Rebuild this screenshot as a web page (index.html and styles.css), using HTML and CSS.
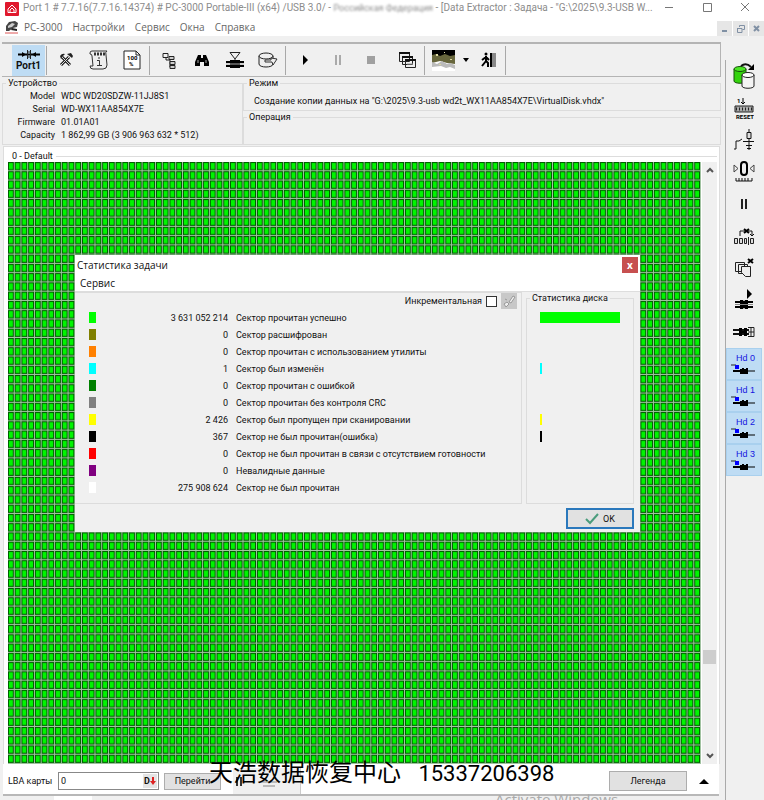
FILE: index.html
```html
<!DOCTYPE html>
<html lang="ru">
<head>
  <meta charset="UTF-8">
  <meta name="viewport" content="width=device-width, initial-scale=1.0">
  <title>PC-3000 Data Extractor</title>
  <link rel="stylesheet" href="styles.css">
</head>
<body>
  <div class="app">
    <!-- Window title -->
    <header class="titlebar">
      <svg class="app-icon" width="14" height="14" viewBox="0 0 14 14"><rect width="14" height="14" rx="1" fill="#e0182d"/><path d="M3 10.500V7L7 3l4 4v3.500H3M5 10V8l2-2 2 2v2" fill="none" stroke="#fff"/></svg>
      <div class="title">Port 1 # 7.7.16(7.7.16.14374) # PC-3000 Portable-III (x64) /USB 3.0/ - <span class="masked">Российская Федерация</span> - [Data Extractor : Задача - "G:\2025\9.3-USB W...</div>
      <div class="window-buttons">
        <button aria-label="Свернуть"><svg width="10" height="10"><path d="M1 5.500h8" stroke="#777"/></svg></button>
        <button aria-label="Развернуть"><svg width="10" height="10"><path d="M1.500 1.500h8v8h-8z" fill="none" stroke="#777"/></svg></button>
        <button aria-label="Закрыть"><svg width="10" height="10"><path d="M1 1l8 8M9 1L1 9" stroke="#777"/></svg></button>
      </div>
    </header>

    <nav class="menubar">
      <svg class="app-icon" width="14" height="14" viewBox="0 0 14 14"><path d="M1 6l3-4 6-1 3 2-1 4-4 1-4 3H1z" fill="#444"/><path d="M3 6l4-3 3 1-3 3-4 1z" fill="#ccc"/><path d="M7 8l5 1v2l-6-1z" fill="#222"/><path d="M0 13h13" stroke="#d55" stroke-width="1"/></svg>
      <button>PC-3000</button>
      <button>Настройки</button>
      <button>Сервис</button>
      <button>Окна</button>
      <button>Справка</button>
      <div class="child-buttons">
        <button aria-label="Свернуть окно"><svg width="9" height="9"><path d="M2 7h5" stroke="#8090a4" stroke-width="2"/></svg></button>
        <button aria-label="Восстановить окно"><svg width="9" height="9"><path d="M3.500 3V1.500h5v4H6.500M1 4.500h5v4H1.500v-4" fill="none" stroke="#8090a4"/></svg></button>
        <button aria-label="Закрыть окно"><svg width="9" height="9"><path d="M2 2l5 5M7 2L2 7" stroke="#8090a4" stroke-width="2"/></svg></button>
      </div>
    </nav>

    <div class="workspace">
      <main class="main">
        <div class="toolbar">
          <button class="tool active port"><svg width="22" height="11" viewBox="0 0 22 11"><path d="M0 5.500h22" stroke="#000" stroke-width="2"/><path d="M4 3v5l4-2.500zM18 3v5l-4-2.500z"/><path d="M9.500 1v9M12.500 1v9M9 3h4M9 8h4" stroke="#222"/></svg><span>Port1</span></button>
          <i class="sep"></i>
          <button class="tool" aria-label="Утилиты"><svg width="16" height="16" viewBox="0 0 16 16"><path d="M4 5l8 8M11 5l-8 8" stroke="#222" stroke-width="3"/><path d="M4 5l8 8M11 5l-8 8" stroke="#ddd"/><path d="M2 4q2-3 5-2L5 4 3 7zM9 2l5 4 1-2-2-3z" fill="#222"/></svg></button>
          <button class="tool" aria-label="Протокол"><svg width="20" height="20" viewBox="0 0 20 20"><path d="M1 3Q1 1 3 1h15q-2 1-1 4l1 10q0 4-4 4H4q-3 0-3-3h3L3 6Q3 4 1 4z" fill="#eee" stroke="#333"/><path d="M5 4h11" stroke="#333" stroke-width="3" stroke-dasharray="2 1"/><path d="M8 10.500h2.500V15M8 15.500h5M9 8h2" fill="none" stroke="#333"/></svg></button>
          <button class="tool" aria-label="Отчёт"><svg width="18" height="20" viewBox="0 0 18 20"><path d="M1 1h12l4 4v14H1z" fill="#fff" stroke="#222"/><path d="M13 1v4h4" fill="none" stroke="#222"/><text x="4" y="10" class="svg-small">100</text><text x="6" y="16" class="svg-small">%</text></svg></button>
          <i class="sep"></i>
          <button class="tool" aria-label="Структура"><svg width="14" height="17" viewBox="0 0 14 17"><path d="M1 1.500h5v4H1zM4 6v2h4M8 8v7" fill="none" stroke="#222"/><path d="M7 4.500h5v3H7zM8 9.500h5v3H8zM8 13.500h5v3H8z" fill="#ccc" stroke="#222"/></svg></button>
          <button class="tool" aria-label="Поиск"><svg width="14" height="13" viewBox="0 0 14 13"><path d="M3 1h3v3h2V1h3l3 7v4H9V8H5v4H0V8z"/><path d="M3 6v3M11 6v3" stroke="#aaa"/></svg></button>
          <button class="tool" aria-label="Фильтр"><svg width="20" height="18" viewBox="0 0 20 18"><path d="M5 1.500h10L10 8zM10 8v9" fill="none" stroke="#222"/><path d="M1 11h18M1 15h18" stroke="#000" stroke-width="2"/><path d="M5 9h10v8H5z"/><path d="M1 13h18" stroke="#aaa"/></svg></button>
          <button class="tool" aria-label="Диск"><svg width="20" height="16" viewBox="0 0 20 16"><path d="M1 4v8c0 4 14 4 14 0V4" fill="#eee" stroke="#222"/><ellipse cx="8" cy="4" rx="7" ry="3" fill="#eee" stroke="#222"/><path d="M7 8h6V6l6 1-4 6-1-3H7z" fill="#eee" stroke="#333"/></svg></button>
          <i class="sep"></i>
          <button class="tool" aria-label="Старт"><svg width="6" height="10"><path d="M1 0l5 5-5 5z"/></svg></button>
          <button class="tool" aria-label="Пауза"><svg width="8" height="10"><path d="M2 0v10M6 0v10" stroke="#aaa" stroke-width="2"/></svg></button>
          <button class="tool" aria-label="Стоп"><svg width="8" height="8"><path d="M0 0h8v8H0z" fill="#a0a0a0"/></svg></button>
          <button class="tool windows" aria-label="Окна"><svg width="18" height="18" viewBox="0 0 18 18"><g fill="#eee" stroke="#222"><path d="M1.500 1.500h10v9h-10zM4.500 5.500h10v8h-10zM7.500 8.500h10v8h-10z"/></g><path d="M1 2h11M4 6h11M7 9h11" stroke="#111" stroke-width="2"/><path d="M9 13h6" stroke="#999"/></svg></button>
          <i class="sep"></i>
          <button class="tool" aria-label="Карта"><svg width="23" height="21" viewBox="0 0 23 21"><path d="M0 0h23v21H0z" fill="#fff"/><path d="M0 0h23v6H0z"/><path d="M0 5l4-1 4 2 5-2 5 2 5-1v9l-8-1-7-2-8 2z" fill="#68673d"/><path d="M0 12l5 2 5-3 5 3 3-1 5 2v4l-5-2-4 1-5-2-9 1z" fill="#bbb"/><path d="M4 4h2v2H4zM12 2h1v1h-1zM18 9h2v1h-2zM7 14h2v1H7z" fill="#dcd8a0"/></svg></button>
          <button class="drop" aria-label="Список"><svg width="6" height="4"><path d="M0 0h6L3 4z"/></svg></button>
          <button class="tool" aria-label="Выход"><svg width="16" height="16" viewBox="0 0 16 16"><path d="M10 1h2v14h-2z"/><path d="M12 1h4v14h-4z" fill="#888"/><circle cx="6" cy="2" r="1.500"/><path d="M6 4v5l-4 5M6 9l2 2v4M6 5L2 8M6 5l3 3" fill="none" stroke="#000" stroke-width="2"/></svg></button>
          <i class="sep"></i>
        </div>

        <section class="info">
          <fieldset class="group device">
            <legend>Устройство</legend>
            <dl>
              <dt>Model</dt><dd>WDC WD20SDZW-11JJ8S1</dd>
              <dt>Serial</dt><dd>WD-WX11AA854X7E</dd>
              <dt>Firmware</dt><dd>01.01A01</dd>
              <dt>Capacity</dt><dd>1 862,99 GB (3 906 963 632 * 512)</dd>
            </dl>
          </fieldset>
          <div class="state">
            <fieldset class="group">
              <legend>Режим</legend>
              <p>Создание копии данных на "G:\2025\9.3-usb wd2t_WX11AA854X7E\VirtualDisk.vhdx"</p>
            </fieldset>
            <fieldset class="group">
              <legend>Операция</legend>
            </fieldset>
          </div>
        </section>

        <section class="map-panel">
          <h2><span>0 - Default</span></h2>
          <div class="map-area">
            <!-- 103 x 65 sectors -->
            <svg class="map" viewBox="0 0 721 585" preserveAspectRatio="none">
              <defs>
                <pattern id="cell" width="7" height="9" patternUnits="userSpaceOnUse">
                  <rect width="7" height="9" fill="#a4c4a4"/>
                  <rect width="6" height="8" fill="#005c00"/>
                  <rect x="1" y="1" width="4" height="6" fill="#00f500"/>
                </pattern>
              </defs>
              <rect width="721" height="585" fill="url(#cell)"/>
            </svg>
            <div class="scrollbar">
              <svg width="8" height="6"><path d="M1 5l3-3 3 3" fill="none" stroke="#555" stroke-width="2"/></svg>
              <div class="thumb"></div>
              <svg width="8" height="6"><path d="M1 1l3 3 3-3" fill="none" stroke="#555" stroke-width="2"/></svg>
            </div>
          </div>
        </section>

        <form class="bottom">
          <label for="lba">LBA карты</label>
          <div class="lba-box">
            <input id="lba" type="text" value="0">
            <button type="button" aria-label="Система счисления"><b>D</b><svg width="6" height="8"><path d="M2 0h2v4h2L3 8 0 4h2z" fill="#d22"/></svg></button>
          </div>
          <button type="button" class="btn go">Перейти</button>
          <div class="mini-tools">
            <svg width="50" height="14"><path d="M4 3v9M8 3v9" stroke="#333" stroke-width="2"/><path d="M28 8h16M30 12h12" stroke="#888"/></svg>
          </div>
          <button type="button" class="btn legend">Легенда</button>
          <button type="button" class="up" aria-label="Показать"><svg width="10" height="6"><path d="M0 6l5-5 5 5z"/></svg></button>
        </form>
        <div class="tabs"><i></i></div>
      </main>

      <aside class="sidebar">
        <button aria-label="Питание"><svg width="22" height="27" viewBox="0 0 22 27"><path d="M1 6v12c0 3 12 3 12 0V6" fill="#34d40d" stroke="#174f0b"/><ellipse cx="7" cy="6" rx="6" ry="2.500" fill="#4ae623" stroke="#174f0b"/><path d="M9 12v11c0 3 12 3 12 0V12" fill="#f4f4f4" stroke="#222"/><ellipse cx="15" cy="12" rx="6" ry="2.500" fill="#fff" stroke="#222"/><path d="M8 3q5-4 10 1" fill="none" stroke="#111" stroke-width="2"/><path d="M21 1v6h-6z"/></svg></button>
        <button aria-label="Reset"><svg width="20" height="22" viewBox="0 0 20 22"><text x="3" y="6" class="svg-small">1</text><path d="M9 1v6M7 5l2 2 2-2" fill="none" stroke="#000"/><path d="M1 9h18v6H1z" fill="#aaa" stroke="#222"/><path d="M2 12h16" stroke="#222" stroke-width="3" stroke-dasharray="1 2"/><text x="2" y="22" class="svg-small">RESET</text></svg></button>
        <button aria-label="Ключ"><svg width="20" height="22" viewBox="0 0 20 22"><path d="M0 20h2v-8h3l3-2" fill="none" stroke="#111"/><path d="M13 3.500h4v6h-4zM15 0v3M15 10v3M9 12.500h12M12 16.500h6M15 13v8M13 19.500h4" fill="#ddd" stroke="#111"/></svg></button>
        <button aria-label="Рекалибровка"><svg width="22" height="22" viewBox="0 0 22 22"><path d="M1 4v7l4-3.500zM21 4v7l-4-3.500z" fill="#eee" stroke="#444"/><rect x="8" y="1" width="6" height="13" rx="3" fill="none" stroke="#000" stroke-width="2"/><path d="M3 17v3h16v-3M6 17v3M9 17v3M12 17v3M15 17v3" fill="none" stroke="#111"/></svg></button>
        <button aria-label="Пауза"><svg width="8" height="10"><path d="M2 0v10M6 0v10" stroke="#222" stroke-width="2"/></svg></button>
        <button aria-label="Пропуск"><svg width="20" height="17" viewBox="0 0 20 17"><path d="M6 8V3h12v5M16 6l2 2 2-2" fill="none" stroke="#111"/><path d="M10 1l5 4M15 1l-5 4" stroke="#000" stroke-width="2"/><path d="M.500 10.500h3v5h-3zM5.500 10.500h3v5h-3zM10.500 10.500h2v5h-2zM16.500 10.500h3v5h-3zM14.500 9v8" fill="#ddd" stroke="#222"/></svg></button>
        <button aria-label="Очистить"><svg width="20" height="20" viewBox="0 0 20 20"><g fill="#eee" stroke="#222"><path d="M1.500 4.500h9v9h-9zM4.500 6.500h9v9h-9z"/><path d="M7.500 8.500h9v10h-5l-4-4z"/></g><path d="M14 1l5 4M19 1l-5 4" stroke="#000" stroke-width="2"/></svg></button>
        <button aria-label="Запуск"><svg width="20" height="22" viewBox="0 0 20 22"><path d="M13 0l5 5-5 5z"/><path d="M1 13h18M1 18h18" stroke="#000" stroke-width="2"/><path d="M6 11h3l1 2 1-2h3v9h-3l-1-2-1 2H6z"/><path d="M1 15.500h18" stroke="#888"/></svg></button>
        <button aria-label="Головы"><svg width="22" height="12" viewBox="0 0 22 12"><path d="M0 4h16M0 8h16" stroke="#111" stroke-width="2"/><path d="M6 2h3v3h2V2h3v8h-3V7H9v3H6z"/><path d="M15 1.500h6v9h-6M15 6h6M18 1v10" fill="none" stroke="#222"/></svg></button>
        <button class="head">Hd 0<svg width="24" height="10"><use href="#hd"/></svg></button>
        <button class="head">Hd 1<svg width="24" height="10"><use href="#hd"/></svg></button>
        <button class="head">Hd 2<svg width="24" height="10"><use href="#hd"/></svg></button>
        <button class="head">Hd 3<svg width="24" height="10"><use href="#hd"/></svg></button>
      </aside>
    </div>

    <!-- Task statistics dialog -->
    <div class="dialog" role="dialog" aria-labelledby="dialog-title">
      <div class="dialog-title">
        <span id="dialog-title">Статистика задачи</span>
        <button aria-label="Закрыть">x</button>
      </div>
      <div class="dialog-menu"><button>Сервис</button></div>
      <div class="dialog-body">
        <div class="stats">
          <div class="stats-head">
            <label for="inc">Инкрементальная</label>
            <input id="inc" type="checkbox">
            <button aria-label="Очистить"><svg width="14" height="14"><path d="M2 10l3-2 2 2-3 3zM7 8l4-6 2 1-4 6zM3 5l2 1" fill="#eee" stroke="#999"/></svg></button>
          </div>
          <table>
            <tr><td><i class="chip lime"></i></td><td>3 631 052 214</td><td>Сектор прочитан успешно</td></tr>
            <tr><td><i class="chip olive"></i></td><td>0</td><td>Сектор расшифрован</td></tr>
            <tr><td><i class="chip orange"></i></td><td>0</td><td>Сектор прочитан с использованием утилиты</td></tr>
            <tr><td><i class="chip cyan"></i></td><td>1</td><td>Сектор был изменён</td></tr>
            <tr><td><i class="chip green"></i></td><td>0</td><td>Сектор прочитан с ошибкой</td></tr>
            <tr><td><i class="chip gray"></i></td><td>0</td><td>Сектор прочитан без контроля CRC</td></tr>
            <tr><td><i class="chip yellow"></i></td><td>2 426</td><td>Сектор был пропущен при сканировании</td></tr>
            <tr><td><i class="chip black"></i></td><td>367</td><td>Сектор не был прочитан(ошибка)</td></tr>
            <tr><td><i class="chip red"></i></td><td>0</td><td>Сектор не был прочитан в связи с отсутствием готовности</td></tr>
            <tr><td><i class="chip purple"></i></td><td>0</td><td>Невалидные данные</td></tr>
            <tr><td><i class="chip white"></i></td><td>275 908 624</td><td>Сектор не был прочитан</td></tr>
          </table>
        </div>
        <fieldset class="group disk">
          <legend>Статистика диска</legend>
          <div class="bars">
            <i class="lime" style="width: 100%"></i>
            <i></i>
            <i></i>
            <i class="cyan" style="width: 2%"></i>
            <i></i>
            <i></i>
            <i class="yellow" style="width: 2%"></i>
            <i class="black" style="width: 2%"></i>
          </div>
        </fieldset>
      </div>
      <div class="dialog-footer">
        <button><svg width="14" height="12"><path d="M1 6l4 4 8-9" fill="none" stroke="#4a9c7c" stroke-width="2"/></svg>OK</button>
      </div>
    </div>

    <div class="contact">天浩数据恢复中心 <span>15337206398</span></div>
    <div class="activate">Activate Windows</div>
  </div>

  <svg width="0" height="0" class="defs">
    <symbol id="hd" viewBox="0 0 24 10"><path d="M0 1h5" stroke="#222"/><path d="M4 1h4v4H4z" fill="#00f"/><path d="M2 7h22" stroke="#000" stroke-width="1"/><path d="M9 5h2V4h2v1h2V4h2v6H9z"/><path d="M2 7h7" stroke="#000" stroke-width="2"/></symbol>
  </svg>
</body>
</html>
```

FILE: styles.css
```css
* {
  box-sizing: border-box;
}

body {
  margin: 0;
  background: #f0f0f0;
  color: #111;
  font-family: Roboto, Arial, sans-serif;
  font-size: 9px;
  line-height: 12px;
}

button {
  margin: 0;
  padding: 0;
  border: 0;
  background: none;
  color: inherit;
  font: inherit;
  display: flex;
  align-items: center;
  justify-content: center;
}

svg {
  flex: none;
}

.app {
  position: relative;
  height: 100vh;
  overflow: hidden;
  display: flex;
  flex-direction: column;
}

.defs {
  display: block;
}

.svg-small {
  font-size: 6px;
  font-weight: bold;
}

/* Title and menu */
.titlebar {
  flex: none;
  height: 18px;
  padding-left: 5px;
  display: flex;
  align-items: center;
  gap: 4px;
  background: #fff;
  color: #8c8c8c;
  font-size: 10px;
}

.title {
  flex: 1;
  min-width: 0;
  white-space: nowrap;
  padding-bottom: 2px;
}

.masked {
  font-size: 9px;
  filter: blur(1px);
}

.window-buttons {
  display: flex;
  margin-top: -4px;
}

.window-buttons button {
  width: 38px;
  height: 14px;
}

.menubar {
  flex: none;
  height: 18px;
  padding-left: 5px;
  display: flex;
  align-items: center;
  gap: 10px;
  background: #fff;
  color: #666;
  font-family: "Open Sans", sans-serif;
  font-size: 10px;
}

.menubar .app-icon {
  margin-right: -5px;
}

.child-buttons {
  display: flex;
  gap: 1px;
  margin-left: auto;
  align-self: flex-end;
}

.child-buttons button {
  width: 15px;
  height: 15px;
  background: #e6e6e6;
}

.workspace {
  flex: 1;
  min-height: 0;
  display: flex;
}

.main {
  flex: 1;
  min-width: 0;
  padding: 6px 4px 0 2px;
  display: flex;
  flex-direction: column;
}

/* Toolbar */
.toolbar {
  flex: none;
  height: 35px;
  padding-left: 10px;
  display: flex;
  align-items: center;
  border: 1px solid #b4b4b4;
  border-top-width: 2px;
  border-left: 0;
}

.tool {
  width: 33px;
  height: 31px;
}

.windows {
  margin-left: 3px;
}

.port {
  flex-direction: column;
  font-size: 10px;
  font-weight: bold;
  line-height: 11px;
}

.active,
.head {
  background: #bedcf4;
}

.drop {
  width: 11px;
  height: 31px;
}

.sep {
  width: 1px;
  height: 29px;
  margin: 0 2px 0 1px;
  background: #a8a8a8;
}

/* Device info */
.info {
  flex: none;
  display: flex;
}

.group {
  margin: 0;
  padding: 0;
  border: 1px solid #dcdcdc;
  min-width: 0;
}

.group legend {
  margin-left: 3px;
  padding: 0 2px;
}

.device {
  flex: 1;
}

.device dl {
  margin: 1px 0 0;
  display: grid;
  grid-template-columns: 52px 1fr;
  column-gap: 6px;
  line-height: 13px;
}

.device dt {
  text-align: right;
}

.device dd {
  margin: 0;
  white-space: nowrap;
}

.state {
  flex: 2;
  min-width: 0;
  display: flex;
  flex-direction: column;
}

.state .group {
  height: 34px;
}

.state p {
  margin: 6px 0 0 10px;
  line-height: 12px;
  white-space: nowrap;
}

/* Sector map */
.map-panel {
  flex: 1;
  min-height: 0;
  margin: 1px 1px 0 1px;
  padding: 3px 2px 0 4px;
  display: flex;
  flex-direction: column;
  background: #fff;
  border: 1px solid #ddd;
  border-bottom: 0;
}

.map-panel h2 {
  flex: none;
  display: flex;
  align-items: center;
  height: 12px;
  margin: 0;
  font-size: 9px;
  font-weight: normal;
}

.map-panel h2::before {
  content: "";
  width: 4px;
}

.map-panel h2::after {
  content: "";
  flex: 1;
  height: 1px;
  margin-left: 3px;
  background: #ddd;
}

.map-area {
  flex: 1;
  min-height: 0;
  display: flex;
}

.map {
  flex: 1;
  min-width: 0;
  width: 0;
  height: 100%;
}

.scrollbar {
  flex: none;
  width: 15px;
  margin-left: 1px;
  padding: 5px 1px;
  display: flex;
  flex-direction: column;
  align-items: center;
  justify-content: space-between;
  background: #f0f0f0;
}

.thumb {
  width: 13px;
  height: 14px;
  margin: auto 0 89px;
  background: #cdcdcd;
}

.bottom {
  flex: none;
  height: 32px;
  margin: 0 2px 0 1px;
  padding: 4px 3px 0 5px;
  display: flex;
  align-items: center;
  gap: 5px;
  background: #fff;
  border-bottom: 2px solid #b8b8b8;
}

.bottom label {
  min-width: 45px;
}

.lba-box {
  width: 101px;
  height: 18px;
  display: flex;
  align-items: center;
  border: 1px solid #888;
}

.lba-box input {
  flex: 1;
  min-width: 0;
  padding: 0 2px;
  border: 0;
  font: inherit;
  color: inherit;
}

.lba-box button {
  width: 14px;
  height: 14px;
  margin-right: 1px;
  background: #e4e4e4;
}

.btn {
  height: 17px;
  background: #e1e1e1;
  border: 1px solid #adadad;
}

.go {
  width: 57px;
}

.mini-tools {
  align-self: stretch;
  width: 68px;
  margin-left: 7px;
  padding-top: 6px;
  background: #f0f0f0;
  border-right: 1px solid #ccc;
}

.legend {
  width: 78px;
  height: 20px;
  margin-left: auto;
}

.up {
  width: 24px;
  height: 20px;
}

.tabs {
  flex: none;
  height: 4px;
  padding-left: 52px;
}

.tabs i {
  display: block;
  width: 38px;
  height: 4px;
  background: #fff;
}

/* Right toolbar */
.sidebar {
  flex: none;
  width: 39px;
  margin-top: 24px;
  padding-right: 2px;
  border-left: 1px solid #aaa;
}

.sidebar button {
  width: 36px;
  height: 32px;
}

.sidebar .head {
  flex-direction: column;
  align-items: flex-end;
  gap: 1px;
  padding-right: 6px;
  border: 1px solid #a9d0ee;
  color: #1515e0;
  font-family: "Liberation Sans", Arial, sans-serif;
  line-height: 9px;
}

/* Dialog */
.dialog {
  position: absolute;
  left: 75px;
  right: 124px;
  top: 255px;
  background: #f0f0f0;
}

.dialog-title {
  height: 19px;
  padding: 0 2px;
  display: flex;
  align-items: center;
  justify-content: space-between;
  background: #fff;
  font-family: "Open Sans", sans-serif;
  font-size: 10px;
}

.dialog-title button {
  width: 16px;
  height: 16px;
  background: #c75050;
  color: #fff;
  font-weight: bold;
  line-height: 10px;
}

.dialog-menu {
  height: 18px;
  padding: 3px 5px;
  background: #fff;
  border-bottom: 1px solid #ddd;
  font-family: "Open Sans", sans-serif;
  font-size: 10px;
}

.dialog-body {
  display: flex;
  gap: 4px;
  padding-right: 6px;
}

.stats {
  flex: 1;
  border: 1px solid #dcdcdc;
  border-left: 0;
}

.stats-head {
  height: 16px;
  padding-right: 4px;
  display: flex;
  align-items: center;
  justify-content: flex-end;
  gap: 4px;
}

.stats-head input {
  appearance: none;
  width: 11px;
  height: 11px;
  margin: 0;
  background: #fff;
  border: 1px solid #333;
}

.stats-head button {
  width: 16px;
  height: 16px;
  background: #c8c8c8;
}

.stats table {
  width: 100%;
  margin-bottom: 7px;
  border-collapse: collapse;
}

.stats td {
  height: 17px;
  padding: 0;
  white-space: nowrap;
}

.stats td:nth-child(1) {
  width: 32px;
  padding-left: 14px;
}

.stats td:nth-child(2) {
  width: 121px;
  text-align: right;
}

.stats td:nth-child(3) {
  padding-left: 8px;
}

.chip {
  display: block;
  width: 7px;
  height: 11px;
}

.disk {
  flex: none;
  width: 108px;
}

.bars {
  padding: 8px 13px 0;
  display: grid;
  grid-auto-rows: 11px;
  row-gap: 6px;
}

.lime { background: #0f0; }
.olive { background: #808000; }
.orange { background: #ff8000; }
.cyan { background: #0ff; }
.green { background: #008000; }
.gray { background: #808080; }
.yellow { background: #ff0; }
.black { background: #000; }
.red { background: #f00; }
.purple { background: #800080; }
.white { background: #fff; }

.dialog-footer {
  padding: 4px 6px 3px 0;
  display: flex;
  justify-content: flex-end;
}

.dialog-footer button {
  width: 68px;
  height: 21px;
  gap: 4px;
  background: #e1e1e1;
  border: 2px solid #2a78bc;
}

/* Overlay texts */
.contact {
  position: absolute;
  left: 209px;
  bottom: 12px;
  color: #000;
  font-family: "Noto Sans CJK SC", sans-serif;
  font-size: 24px;
  line-height: 28px;
  white-space: nowrap;
}

.contact span {
  margin-left: 12px;
  font-family: Roboto, sans-serif;
  font-size: 22px;
}

.activate {
  position: absolute;
  left: 495px;
  bottom: -8px;
  color: #aaa;
  font-family: "Open Sans", sans-serif;
  font-size: 15px;
  line-height: 18px;
}
```
